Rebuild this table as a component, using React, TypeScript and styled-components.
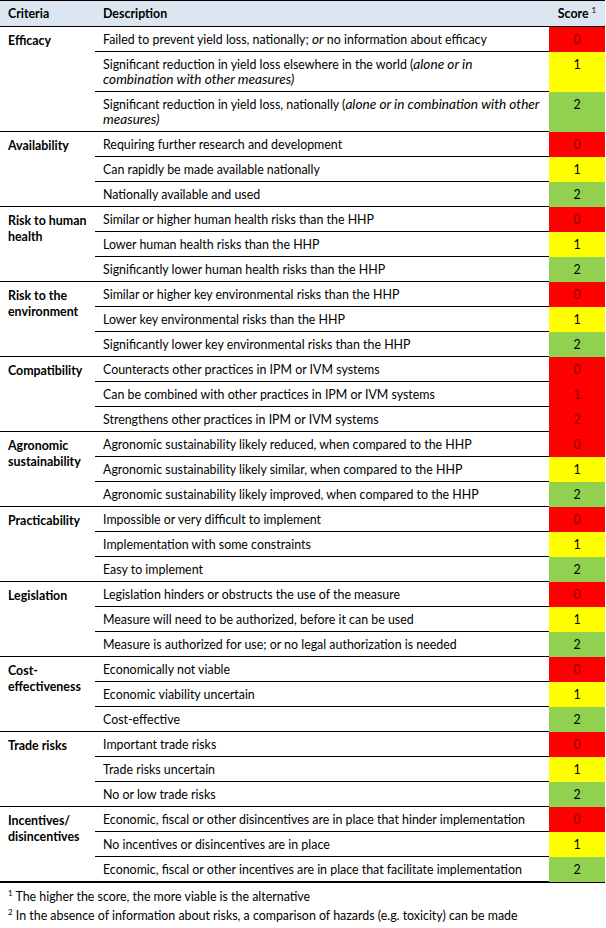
import React from "react";
import styled, { createGlobalStyle } from "styled-components";

const Global = createGlobalStyle`
  html, body { margin: 0; padding: 0; background: #fff; }
  body { font-family: Lato, "Open Sans", "Liberation Sans", sans-serif; color: #000; }
`;

type Score = 0 | 1 | 2;
type Tone = "red" | "yellow" | "green";

interface Item {
  text: React.ReactNode;
  score: Score;
  tone: Tone;
}
interface Group {
  label: React.ReactNode;
  items: Item[];
}

const toneBg: Record<Tone, string> = {
  red: "#ff0000",
  yellow: "#ffff00",
  green: "#92d050",
};
const toneFg: Record<Tone, string> = {
  red: "#8a0000",
  yellow: "#000",
  green: "#000",
};

const Em = styled.i`
  font-style: italic;
  font-size: 1.1em;
  line-height: 15px;
`;

const std = (a: string, b: string, c: string): Item[] => [
  { text: a, score: 0, tone: "red" },
  { text: b, score: 1, tone: "yellow" },
  { text: c, score: 2, tone: "green" },
];

const groups: Group[] = [
  {
    label: "Efficacy",
    items: [
      {
        text: (
          <>
            Failed to prevent yield loss, nationally; <Em>or</Em> no information about efficacy
          </>
        ),
        score: 0,
        tone: "red",
      },
      {
        text: (
          <>
            Significant reduction in yield loss elsewhere in the world (<Em>alone or in</Em>
            <br />
            <Em>combination with other measures)</Em>
          </>
        ),
        score: 1,
        tone: "yellow",
      },
      {
        text: (
          <>
            Significant reduction in yield loss, nationally (<Em>alone or in combination with other</Em>
            <br />
            <Em>measures)</Em>
          </>
        ),
        score: 2,
        tone: "green",
      },
    ],
  },
  {
    label: "Availability",
    items: std(
      "Requiring further research and development",
      "Can rapidly be made available nationally",
      "Nationally available and used"
    ),
  },
  {
    label: (
      <>
        Risk to human
        <br />
        health
      </>
    ),
    items: std(
      "Similar or higher human health risks than the HHP",
      "Lower human health risks than the HHP",
      "Significantly lower human health risks than the HHP"
    ),
  },
  {
    label: (
      <>
        Risk to the
        <br />
        environment
      </>
    ),
    items: std(
      "Similar or higher key environmental risks than the HHP",
      "Lower key environmental risks than the HHP",
      "Significantly lower key environmental risks than the HHP"
    ),
  },
  {
    label: "Compatibility",
    items: [
      { text: "Counteracts other practices in IPM or IVM systems", score: 0, tone: "red" },
      { text: "Can be combined with other practices in IPM or IVM systems", score: 1, tone: "red" },
      { text: "Strengthens other practices in IPM or IVM systems", score: 2, tone: "red" },
    ],
  },
  {
    label: (
      <>
        Agronomic
        <br />
        sustainability
      </>
    ),
    items: std(
      "Agronomic sustainability likely reduced, when compared to the HHP",
      "Agronomic sustainability likely similar, when compared to the HHP",
      "Agronomic sustainability likely improved, when compared to the HHP"
    ),
  },
  {
    label: "Practicability",
    items: std(
      "Impossible or very difficult to implement",
      "Implementation with some constraints",
      "Easy to implement"
    ),
  },
  {
    label: "Legislation",
    items: std(
      "Legislation hinders or obstructs the use of the measure",
      "Measure will need to be authorized, before it can be used",
      "Measure is authorized for use; or no legal authorization is needed"
    ),
  },
  {
    label: (
      <>
        Cost-
        <br />
        effectiveness
      </>
    ),
    items: std("Economically not viable", "Economic viability uncertain", "Cost-effective"),
  },
  {
    label: "Trade risks",
    items: std("Important trade risks", "Trade risks uncertain", "No or low trade risks"),
  },
  {
    label: (
      <>
        Incentives/
        <br />
        disincentives
      </>
    ),
    items: std(
      "Economic, fiscal or other disincentives are in place that hinder implementation",
      "No incentives or disincentives are in place",
      "Economic, fiscal or other incentives are in place that facilitate implementation"
    ),
  },
];

const Table = styled.div`
  width: 605px;
  font-size: 12.4px;
  line-height: 15px;
  color: #000;
  border-top: 1px solid #000;
`;

const Grid = styled.div`
  display: grid;
  grid-template-columns: 95px 454px 56px;
`;

const HeaderRow = styled(Grid)`
  background: #dce6f1;
  border-bottom: 1px solid #000;
  height: 25px;
  align-items: center;
  font-weight: 700;
`;

const HeadCell = styled.div<{ $center?: boolean }>`
  padding: 0 8px;
  text-align: ${(p) => (p.$center ? "center" : "left")};
`;

const Sup = styled.sup`
  font-size: 8px;
  line-height: 0;
  vertical-align: 5px;
  font-weight: 400;
`;

const GroupLabel = styled.div<{ $rows: number }>`
  grid-row: span ${(p) => p.$rows};
  padding: 6px 8px 0;
  font-weight: 700;
  line-height: 16px;
  border-bottom: 1px solid #000;
`;

const Desc = styled.div`
  padding: 5px 8px 4px;
  border-bottom: 1px solid #000;
  min-height: 15px;
`;

const ScoreCell = styled.div<{ $tone: Tone }>`
  background: ${(p) => toneBg[p.$tone]};
  color: ${(p) => toneFg[p.$tone]};
  text-align: center;
  padding-top: 5px;
`;

const Notes = styled.div`
  border-top: 1px solid #000;
  border-bottom: 1px solid #000;
  width: 605px;
  padding: 4px 0 3px;
  font-size: 12.4px;
  color: #000;
`;

const Note = styled.div`
  padding: 2px 8px;
  line-height: 15px;
`;

export default function App() {
  return (
    <>
      <Global />
      <Table>
        <HeaderRow>
          <HeadCell>Criteria</HeadCell>
          <HeadCell>Description</HeadCell>
          <HeadCell $center>
            Score <Sup>1</Sup>
          </HeadCell>
        </HeaderRow>
        {groups.map((g, gi) => (
          <Grid key={gi}>
            <GroupLabel $rows={g.items.length}>{g.label}</GroupLabel>
            {g.items.map((it, i) => (
              <React.Fragment key={i}>
                <Desc>{it.text}</Desc>
                <ScoreCell $tone={it.tone}>{it.score}</ScoreCell>
              </React.Fragment>
            ))}
          </Grid>
        ))}
      </Table>
      <Notes>
        <Note>
          <Sup>1</Sup> The higher the score, the more viable is the alternative
        </Note>
        <Note>
          <Sup>2</Sup> In the absence of information about risks, a comparison of hazards (e.g. toxicity) can be made
        </Note>
      </Notes>
    </>
  );
}
